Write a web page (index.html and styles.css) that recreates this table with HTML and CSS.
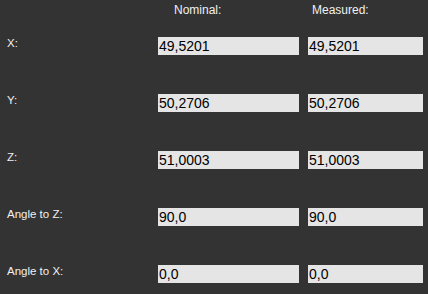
FILE: index.html
```html
<!DOCTYPE html>
<html>
<head>
<meta charset="utf-8">
<link rel="stylesheet" href="styles.css">
</head>
<body>
<div class="panel">
  <div class="head">
    <div class="h-spacer"></div>
    <div class="h-nom">Nominal:</div>
    <div class="h-meas">Measured:</div>
  </div>
  <div class="grid">
    <div class="label">X:</div>
    <div class="box">49,5201</div>
    <div class="box">49,5201</div>

    <div class="label">Y:</div>
    <div class="box">50,2706</div>
    <div class="box">50,2706</div>

    <div class="label">Z:</div>
    <div class="box">51,0003</div>
    <div class="box">51,0003</div>

    <div class="label">Angle to Z:</div>
    <div class="box">90,0</div>
    <div class="box">90,0</div>

    <div class="label">Angle to X:</div>
    <div class="box">0,0</div>
    <div class="box">0,0</div>
  </div>
</div>
</body>
</html>
```

FILE: styles.css
```css
html, body {
  margin: 0;
  padding: 0;
  background: #333333;
}
body {
  width: 428px;
  height: 294px;
  overflow: hidden;
  font-family: "Liberation Sans", Arial, sans-serif;
}
.panel {
  display: flex;
  flex-direction: column;
}
.head {
  display: grid;
  grid-template-columns: 149px 141px 115px;
  column-gap: 9px;
  height: 37px;
  padding-top: 3px;
  box-sizing: border-box;
  color: #f0f0f0;
  font-size: 12px;
  line-height: 14px;
}
.h-nom { padding-left: 16px; }
.h-meas { padding-left: 4px; }
.grid {
  display: grid;
  grid-template-columns: 149px 141px 115px;
  grid-auto-rows: 18px;
  column-gap: 9px;
  row-gap: 39px;
}
.label {
  padding-left: 7px;
  color: #f0f0f0;
  font-size: 11.5px;
  line-height: 13px;
}
.box {
  background: #e5e5e5;
  color: #000;
  font-size: 14px;
  line-height: 18px;
  padding-left: 1px;
  white-space: nowrap;
}
```
